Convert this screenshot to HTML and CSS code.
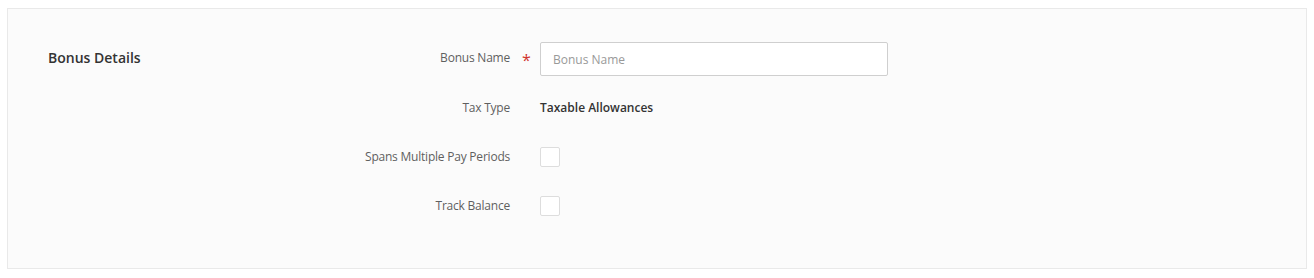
FILE: index.html
```html
<!DOCTYPE html>
<html lang="en">
<head>
<meta charset="utf-8">
<title>Bonus Details</title>
<link rel="stylesheet" href="styles.css">
</head>
<body>
<section class="card">
  <h2 class="section-title">Bonus Details</h2>
  <div class="form">
    <label class="label" for="bonus-name">Bonus Name</label>
    <span class="req">*</span>
    <div class="control"><input id="bonus-name" class="input" type="text" placeholder="Bonus Name"></div>

    <span class="label">Tax Type</span>
    <span class="req"></span>
    <div class="control"><span class="value">Taxable Allowances</span></div>

    <span class="label">Spans Multiple Pay Periods</span>
    <span class="req"></span>
    <div class="control"><span class="checkbox"></span></div>

    <span class="label">Track Balance</span>
    <span class="req"></span>
    <div class="control"><span class="checkbox"></span></div>
  </div>
</section>
</body>
</html>
```
FILE: styles.css
```css
html, body {
  margin: 0;
  padding: 0;
  background: #ffffff;
}
body {
  padding: 8px 7px 0 7px;
  font-family: "Open Sans", "Noto Sans", sans-serif;
  color: #555555;
}
.card {
  display: flex;
  align-items: flex-start;
  height: 261px;
  box-sizing: border-box;
  background: #fbfbfb;
  border: 1px solid #e9e9e9;
  padding: 33px 40px 0 40px;
}
.section-title {
  margin: 0;
  width: 300px;
  height: 34px;
  line-height: 34px;
  font-size: 14px;
  font-weight: 600;
  color: #333333;
  margin-top: -1px;
}
.form {
  display: grid;
  grid-template-columns: 162px 30px 348px;
  grid-auto-rows: 34px;
  row-gap: 15px;
  align-items: center;
}
.label {
  font-size: 12px;
  letter-spacing: -0.22px;
  text-align: right;
  color: #5f5f5f;
  margin-top: -2px;
}
.label:first-child {
  margin-top: -4px;
}
.req {
  color: #d0342c;
  font-size: 16px;
  text-align: center;
  padding-left: 3px;
  margin-top: 2px;
}
.control {
  display: flex;
  align-items: center;
}
.input {
  width: 100%;
  height: 34px;
  box-sizing: border-box;
  border: 1px solid #cfcfcf;
  border-radius: 2px;
  background: #ffffff;
  padding: 0 12px;
  font-family: "Open Sans", "Noto Sans", sans-serif;
  font-size: 12px;
  color: #333333;
  outline: none;
}
.input::placeholder {
  color: #999999;
}
.value {
  font-size: 12px;
  font-weight: 600;
  color: #333333;
  margin-top: -2px;
}
.checkbox {
  width: 20px;
  height: 20px;
  box-sizing: border-box;
  border: 1px solid #dddddd;
  border-radius: 2px;
  background: #ffffff;
}
```
